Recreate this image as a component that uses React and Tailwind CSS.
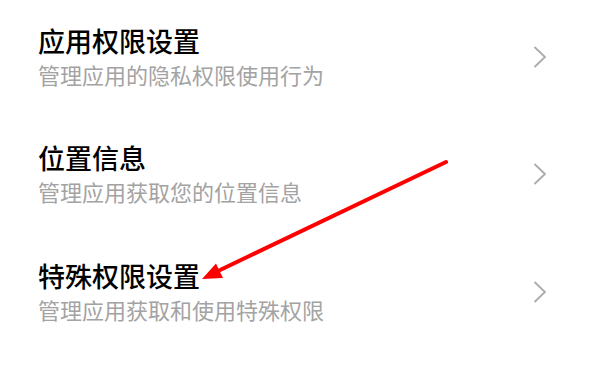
import React from "react";

const rows = [
  { title: "应用权限设置", sub: "管理应用的隐私权限使用行为" },
  { title: "位置信息", sub: "管理应用获取您的位置信息" },
  { title: "特殊权限设置", sub: "管理应用获取和使用特殊权限" },
];

function Chevron() {
  return (
    <svg width="14" height="22" viewBox="0 0 14 22" className="shrink-0">
      <polyline points="1.5,1 12,11 1.5,21" fill="none" stroke="#ababab" strokeWidth="1.8" />
    </svg>
  );
}

export default function App() {
  return (
    <div
      className="relative w-[595px] h-[365px] bg-white overflow-hidden"
      style={{ fontFamily: '"Noto Sans CJK SC", "Noto Sans", sans-serif' }}
    >
      <div className="flex flex-col -mt-[3px]">
        {rows.map((r) => (
          <div key={r.title} className="flex items-center h-[117.5px] pl-[38px] pr-[48px]">
            <div className="flex-1 flex flex-col">
              <div className="text-[27px] leading-[36px] font-medium text-black">{r.title}</div>
              <div className="text-[22px] leading-[30px] text-[#a3a3a3]">{r.sub}</div>
            </div>
            <div className="mt-[2px]">
              <Chevron />
            </div>
          </div>
        ))}
      </div>
      <svg className="absolute inset-0 pointer-events-none" width="595" height="365" viewBox="0 0 595 365">
        <line x1="446" y1="162" x2="218" y2="271" stroke="#ff0000" strokeWidth="4" strokeLinecap="round" />
        <polygon points="202,279 223,278 216,263.5" fill="#ff0000" />
      </svg>
    </div>
  );
}
